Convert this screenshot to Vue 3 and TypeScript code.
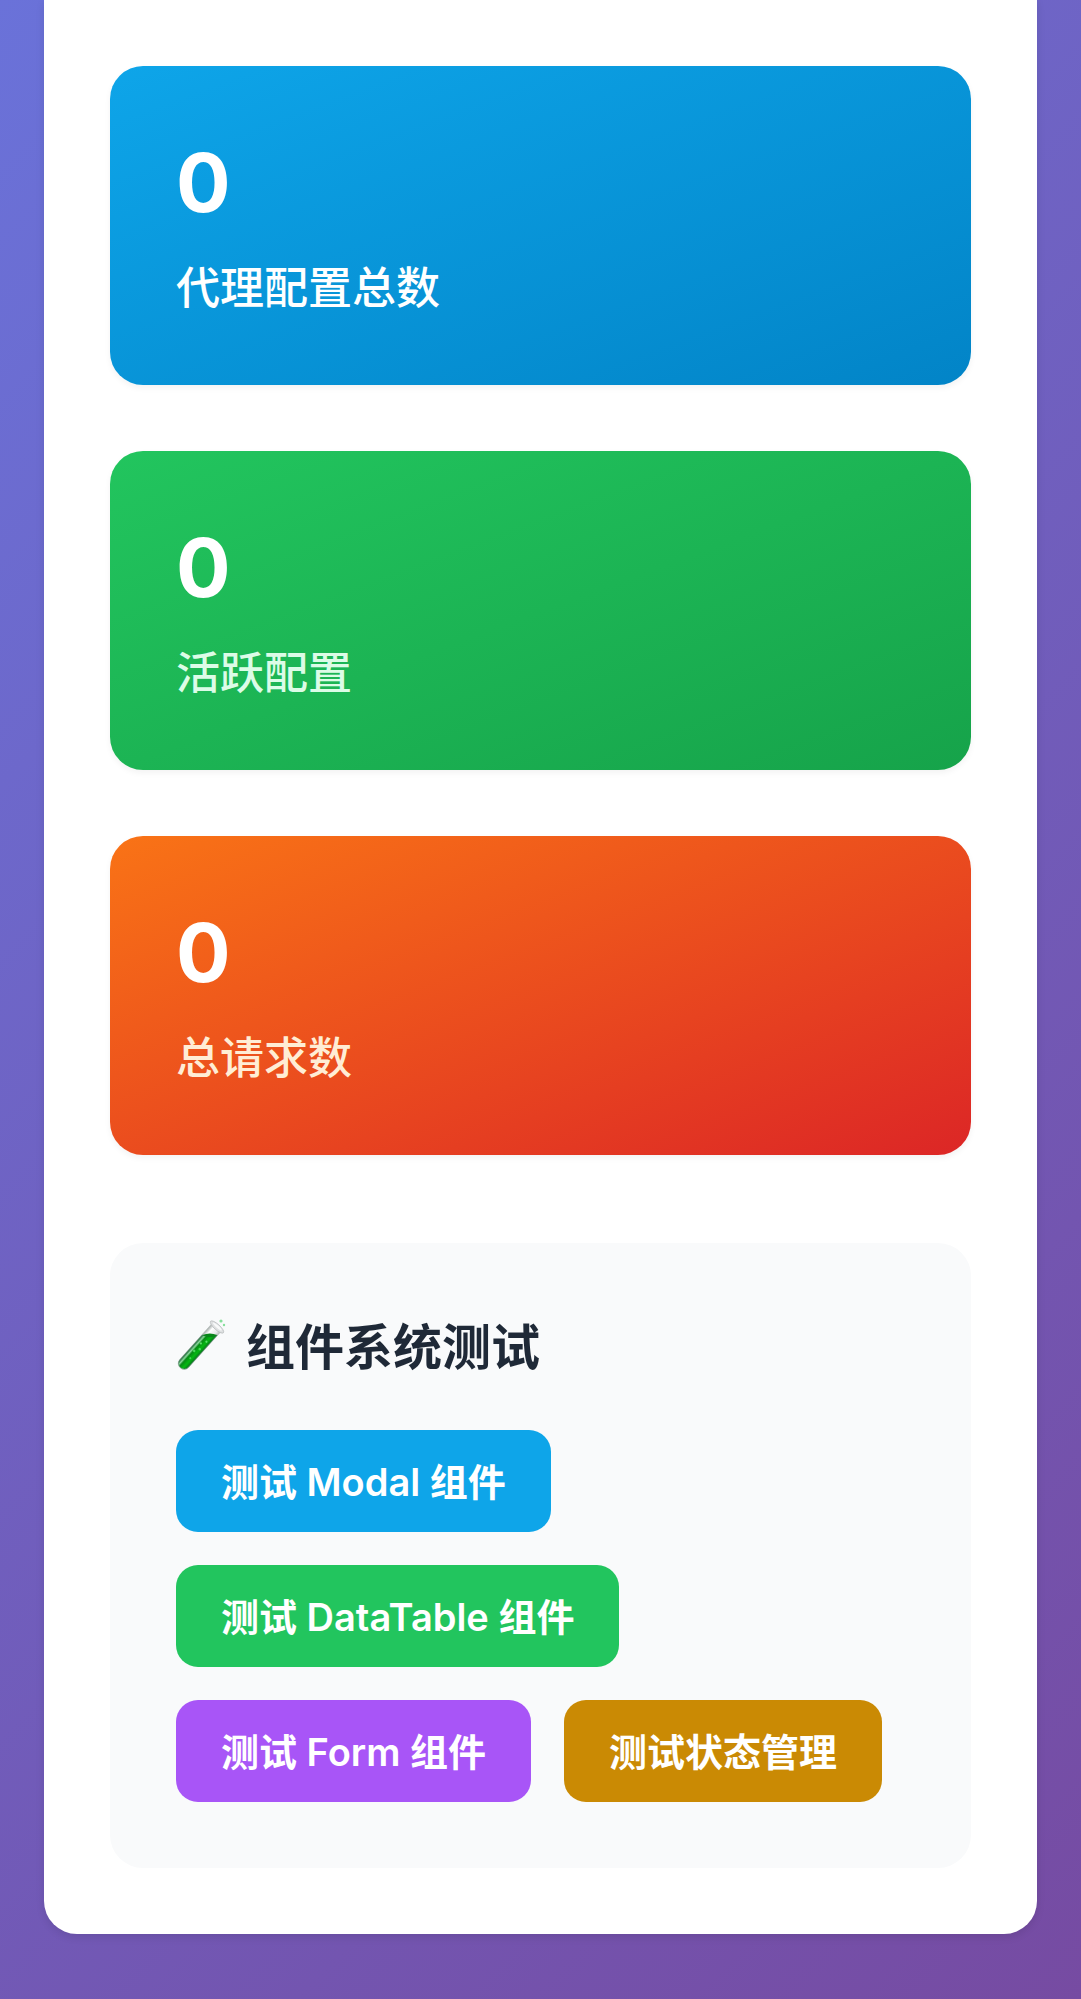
<script setup lang="ts">
interface Stat {
  tone: string
  value: number
  label: string
}

interface TestAction {
  tone: string
  label: string
}

const stats: Stat[] = [
  { tone: 'blue', value: 0, label: '代理配置总数' },
  { tone: 'green', value: 0, label: '活跃配置' },
  { tone: 'orange', value: 0, label: '总请求数' },
]

const actions: TestAction[] = [
  { tone: 'blue', label: '测试 Modal 组件' },
  { tone: 'green', label: '测试 DataTable 组件' },
  { tone: 'purple', label: '测试 Form 组件' },
  { tone: 'amber', label: '测试状态管理' },
]
</script>

<template>
  <div class="page">
    <main class="panel">
      <section class="stats">
        <article v-for="stat in stats" :key="stat.label" class="stat" :class="stat.tone">
          <div class="value">{{ stat.value }}</div>
          <div class="label">{{ stat.label }}</div>
        </article>
      </section>

      <section class="tests">
        <h2 class="title">
          <svg class="tube" viewBox="0 0 49 49" aria-hidden="true">
            <defs>
              <linearGradient id="liquid" x1="0" y1="0" x2="1" y2="0">
                <stop offset="0" stop-color="#12602b" />
                <stop offset="0.2" stop-color="#8ad69c" />
                <stop offset="0.36" stop-color="#078a16" />
                <stop offset="0.7" stop-color="#04b912" />
                <stop offset="1" stop-color="#0a7a1c" />
              </linearGradient>
              <linearGradient id="glass" x1="0" y1="0" x2="1" y2="0">
                <stop offset="0" stop-color="#a3aaa8" />
                <stop offset="0.3" stop-color="#ffffff" />
                <stop offset="0.75" stop-color="#e4e8e7" />
                <stop offset="1" stop-color="#b4bab9" />
              </linearGradient>
            </defs>
            <g transform="translate(41 4) rotate(42)">
              <path d="M-6 0V49a6 6 0 0 0 12 0V0z" fill="url(#glass)" stroke="#b4bcb9" stroke-width="0.6" />
              <path d="M-5.6 16L5.6 6V49a5.6 5.6 0 0 1-11.2 0z" fill="url(#liquid)" stroke="#4b8560" stroke-width="0.6" />
              <path d="M-5.6 16Q-2 8 5.6 6Q4 13-5.6 16z" fill="#08851a" />
              <ellipse cx="0" cy="0" rx="8.6" ry="2.8" fill="#dfe1e2" stroke="#b9bdbe" stroke-width="0.8" />
              <ellipse cx="0" cy="-0.6" rx="5.8" ry="1.3" fill="#f8f9f9" />
              <circle cx="2" cy="18" r="1.1" fill="#58df68" />
              <circle cx="-1" cy="23" r="1.1" fill="#58df68" />
              <circle cx="2" cy="28" r="1.3" fill="#44d757" />
              <circle cx="-1" cy="33" r="1.3" fill="#48d75a" />
              <circle cx="1" cy="41" r="1" fill="#42cf54" />
            </g>
            <circle cx="45" cy="-2" r="1.6" fill="#86df9b" />
            <circle cx="48" cy="2" r="1.2" fill="#86df9b" />
          </svg>
          <span>组件系统测试</span>
        </h2>
        <div class="actions">
          <button v-for="action in actions" :key="action.label" type="button" class="action" :class="action.tone">
            {{ action.label }}
          </button>
        </div>
      </section>
    </main>
  </div>
</template>

<style>
body {
  margin: 0;
}
</style>

<style scoped>
.page {
  box-sizing: border-box;
  min-height: 100vh;
  padding: 0 44px 65px;
  background: linear-gradient(135deg, #6a72d9 0%, #764ba2 100%);
  font-family: Inter, "Noto Sans CJK SC", sans-serif;
}

.panel {
  padding: 66px;
  border-radius: 0 0 33px 33px;
  background: #fff;
  box-shadow: 0 3px 8px rgba(0, 0, 0, 0.1);
}

.stats {
  display: flex;
  flex-direction: column;
  gap: 66px;
}

.stat {
  padding: 68px 66px 64px;
  border-radius: 33px;
  box-shadow: 0 3px 6px rgba(0, 0, 0, 0.05);
}

.stat.blue {
  background: linear-gradient(to bottom right, #0ea5e9, #0284c7);
}

.stat.green {
  background: linear-gradient(to bottom right, #22c55e, #16a34a);
}

.stat.orange {
  background: linear-gradient(to bottom right, #f97316, #dc2626);
}

.value {
  margin-bottom: 22px;
  color: #fff;
  font-size: 81px;
  font-weight: 700;
  line-height: 99px;
}

.label {
  font-size: 44px;
  font-weight: 500;
  line-height: 66px;
}

.blue .label {
  color: #fff;
}

.green .label {
  color: #dcfce7;
}

.orange .label {
  color: #ffedd5;
}

.tests {
  margin-top: 88px;
  padding: 66px;
  border-radius: 33px;
  background: #f9fafb;
}

.title {
  display: flex;
  align-items: center;
  gap: 21px;
  margin: 0 0 44px;
  color: #1f2937;
  font-size: 49px;
  font-weight: 600;
  line-height: 77px;
}

.tube {
  width: 49px;
  height: 49px;
  overflow: visible;
}

.actions {
  display: flex;
  flex-wrap: wrap;
  gap: 33px;
}

.action {
  height: 102px;
  padding: 2px 45px 0;
  border: 0;
  border-radius: 22px;
  color: #fff;
  font-family: inherit;
  font-size: 38px;
  font-weight: 600;
  line-height: 58px;
  cursor: pointer;
}

.action.blue {
  background: #0ea5e9;
}

.action.green {
  background: #22c55e;
}

.action.purple {
  background: #a855f7;
}

.action.amber {
  background: #ca8a04;
}
</style>
